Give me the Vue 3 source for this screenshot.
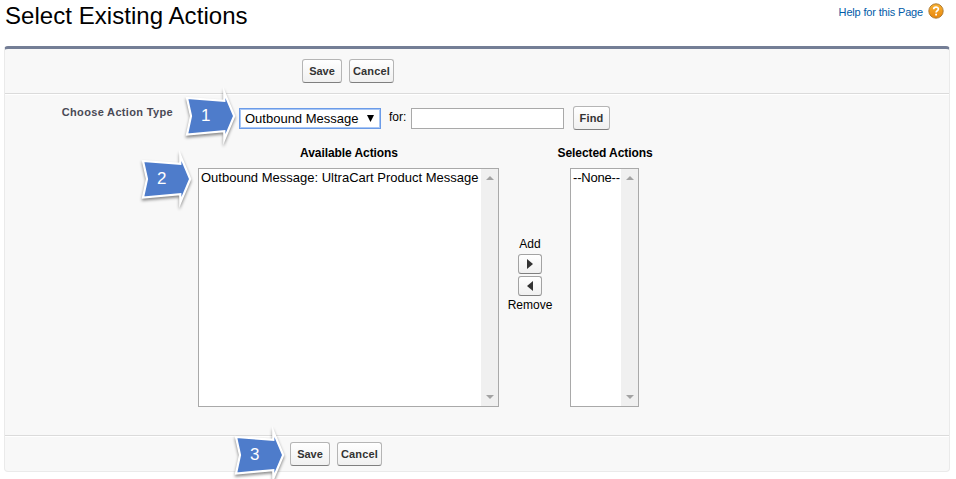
<template>
  <div class="page">
    <div class="page-header">
      <h1>Select Existing Actions</h1>
      <a class="help">
        <span>Help for this Page</span>
        <svg width="16" height="16" viewBox="0 0 16 16">
          <defs>
            <linearGradient id="helpFill" x1="0" y1="0" x2="0" y2="1">
              <stop offset="0" stop-color="#f9b233" />
              <stop offset="1" stop-color="#e8860c" />
            </linearGradient>
          </defs>
          <circle cx="8" cy="8" r="7.2" fill="url(#helpFill)" stroke="#a9752b" stroke-width="0.9" />
          <path d="M5.7 6.3C5.7 3.3 10.4 3.4 10.4 6.1C10.4 7.8 8.1 7.8 8.1 9.6" fill="none" stroke="#fff" stroke-width="1.7" />
          <rect x="7.2" y="10.7" width="1.8" height="1.8" fill="#fff" />
        </svg>
      </a>
    </div>

    <div class="panel">
      <div class="button-row top">
        <button class="btn save">Save</button>
        <button class="btn cancel">Cancel</button>
      </div>

      <div class="body">
        <div class="filter-row">
          <label class="filter-label">Choose Action Type</label>
          <div class="select">
            <span>Outbound Message</span>
            <svg width="7" height="7" viewBox="0 0 7 7"><path d="M0 0H7L3.5 7Z" fill="#000" /></svg>
          </div>
          <span class="for">for:</span>
          <input v-model="search" class="search" type="text" />
          <button class="btn find">Find</button>
        </div>

        <div class="dueling">
          <div class="column available">
            <div class="column-title">Available Actions</div>
            <div class="list">
              <div class="options">
                <div v-for="item in available" :key="item">{{ item }}</div>
              </div>
              <div class="scroll">
                <svg width="8" height="4" viewBox="0 0 8 4"><path d="M0 4H8L4 0Z" fill="#a3a3a3" /></svg>
                <svg width="8" height="4" viewBox="0 0 8 4"><path d="M0 0H8L4 4Z" fill="#a3a3a3" /></svg>
              </div>
            </div>
          </div>

          <div class="movers">
            <span>Add</span>
            <button class="mover">
              <svg width="6" height="10" viewBox="0 0 6 10"><path d="M0 0L6 5L0 10Z" fill="#333" /></svg>
            </button>
            <button class="mover">
              <svg width="6" height="10" viewBox="0 0 6 10"><path d="M6 0L0 5L6 10Z" fill="#333" /></svg>
            </button>
            <span class="remove">Remove</span>
          </div>

          <div class="column selected">
            <div class="column-title">Selected Actions</div>
            <div class="list">
              <div class="options">
                <div v-for="item in selected" :key="item">{{ item }}</div>
              </div>
              <div class="scroll">
                <svg width="8" height="4" viewBox="0 0 8 4"><path d="M0 4H8L4 0Z" fill="#a3a3a3" /></svg>
                <svg width="8" height="4" viewBox="0 0 8 4"><path d="M0 0H8L4 4Z" fill="#a3a3a3" /></svg>
              </div>
            </div>
          </div>
        </div>
      </div>

      <div class="button-row bottom">
        <button class="btn save">Save</button>
        <button class="btn cancel">Cancel</button>
      </div>
    </div>

    <!-- numbered step arrows over the form -->
    <div v-for="n in 3" :key="n" class="step" :class="'step-' + n">
      <svg width="56" height="62" viewBox="0 0 56 62">
        <path d="M3 11L40.3 13.8V5.5L50.2 29L40.3 52.5V44.2L3 47.5L7 29Z" fill="#4e7ccb" stroke="#fff" stroke-width="2.2" stroke-miterlimit="8" />
      </svg>
      <span>{{ n }}</span>
    </div>
  </div>
</template>

<script setup>
import { ref } from 'vue'

const search = ref('')
const available = ref(['Outbound Message: UltraCart Product Message'])
const selected = ref(['--None--'])
</script>

<style>
body {
  margin: 0;
  background: #fff;
}
</style>

<style scoped>
.page {
  position: relative;
  width: 956px;
  height: 479px;
  overflow: hidden;
  box-sizing: border-box;
  padding: 0 6px 0 4px;
  font-family: "Liberation Sans", Arial, sans-serif;
  font-size: 12px;
  color: #000;
}

.page * {
  box-sizing: border-box;
}

.page-header {
  display: flex;
  justify-content: space-between;
  height: 46px;
}

h1 {
  margin: 2px 0 0 1px;
  font-size: 24px;
  line-height: 28px;
  font-weight: normal;
  letter-spacing: 0.05px;
}

.help {
  display: flex;
  align-items: flex-start;
  padding: 3px 6px 0 0;
  gap: 5px;
  font-size: 11px;
  line-height: 19px;
  letter-spacing: -0.17px;
  color: #015ba7;
}

.panel {
  height: 426px;
  border: 1px solid #eaeaea;
  border-top: 3px solid #747e96;
  border-radius: 4px;
  background: #f8f8f8;
}

.button-row {
  display: flex;
  gap: 7px;
}

.top {
  height: 45px;
  padding: 10px 0 0 297px;
  border-bottom: 1px solid #dbdbdb;
}

.bottom {
  height: 36px;
  padding: 6px 0 0 285px;
  border-top: 1px solid #dbdbdb;
  box-shadow: inset 0 1px #fff;
}

.btn {
  height: 24px;
  padding: 0;
  border: 1px solid #b5b5b5;
  border-bottom-color: #7f7f7f;
  border-radius: 3px;
  background: linear-gradient(#fff, #f0f0f0);
  font: bold 11px "Liberation Sans", Arial, sans-serif;
  color: #333;
}

.save {
  width: 40px;
}

.cancel {
  width: 45px;
  letter-spacing: 0.15px;
}

.body {
  height: 341px;
  border-top: 1px solid #fff;
}

.filter-row {
  display: flex;
  align-items: flex-start;
  height: 52px;
  padding-top: 11px;
}

.filter-label {
  width: 168px;
  margin-right: 66px;
  text-align: right;
  font-size: 11px;
  line-height: 13px;
  font-weight: bold;
  letter-spacing: 0.34px;
  white-space: nowrap;
  color: #4a4a56;
}

.select {
  display: flex;
  justify-content: space-between;
  align-items: center;
  width: 142px;
  height: 21px;
  margin-top: 2px;
  padding: 0 6px 1px 5px;
  border: 1px solid #6b9be8;
  box-shadow: inset 0 0 0 1px #a9c7f5;
  background: #fff;
  font-size: 13px;
  line-height: 17px;
  white-space: nowrap;
}

.for {
  width: 22px;
  margin: 3px 0 0 8px;
  line-height: 16px;
}

.search {
  width: 153px;
  height: 21px;
  margin-top: 2px;
  padding: 1px 3px;
  border: 1px solid #a9a9a9;
  background: #fff;
  outline: none;
}

.find {
  width: 37px;
  margin-left: 9px;
  letter-spacing: 0.15px;
}

.dueling {
  display: flex;
  padding-left: 193px;
}

.column-title {
  display: flex;
  justify-content: center;
  height: 21px;
  padding-left: 1px;
  line-height: 13px;
  font-weight: bold;
  letter-spacing: -0.08px;
  white-space: nowrap;
}

.list {
  display: flex;
  height: 239px;
  border: 1px solid #a9a9a9;
  background: #fff;
}

.available {
  width: 301px;
}

.selected {
  width: 69px;
}

.options {
  flex: 1;
  min-width: 0;
  padding: 1px 0 0 2px;
  font-size: 13px;
  line-height: 15px;
  white-space: nowrap;
}

.selected .options {
  letter-spacing: -0.2px;
}

.scroll {
  display: flex;
  flex-direction: column;
  flex-shrink: 0;
  justify-content: space-between;
  align-items: center;
  width: 17px;
  padding: 7px 0;
  background: #f0f0f0;
}

.movers {
  display: flex;
  flex-direction: column;
  align-items: center;
  width: 71px;
  padding: 90px 9px 0 0;
  line-height: 14px;
}

.mover {
  display: flex;
  align-items: center;
  justify-content: center;
  width: 24px;
  height: 20px;
  margin-top: 2px;
  padding: 0;
  border: 1px solid #a3a3a3;
  border-bottom-color: #7f7f7f;
  border-radius: 3px;
  background: linear-gradient(#fff, #f0f0f0);
}

span + .mover {
  margin-top: 3px;
}

.remove {
  margin-top: 2px;
}

.step {
  position: absolute;
  width: 56px;
  height: 62px;
}

.step svg {
  display: block;
  overflow: visible;
  filter: drop-shadow(0 2px 1.5px rgba(0, 0, 0, 0.45));
}

.step span {
  position: absolute;
  left: 17px;
  top: 19px;
  font-size: 17px;
  line-height: 20px;
  color: #fff;
}

.step-1 {
  left: 184px;
  top: 87px;
}

.step-2 {
  left: 140px;
  top: 150px;
}

.step-3 {
  left: 233px;
  top: 426px;
}
</style>
